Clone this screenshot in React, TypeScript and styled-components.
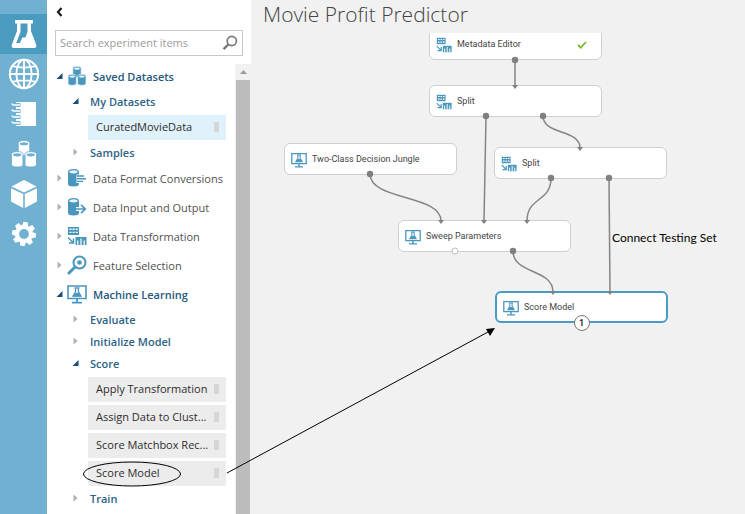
import React from "react";
import styled, { createGlobalStyle, css } from "styled-components";

const sans = '"Open Sans", "Noto Sans", sans-serif';
const BLUE = "#4a97bd";

const GlobalStyle = createGlobalStyle`
  *, *::before, *::after { box-sizing: border-box; }
  body { margin: 0; font-family: ${sans}; background: #f1f1f1; color: #444; }
  ul { list-style: none; margin: 0; padding: 0; }
  button { font: inherit; color: inherit; border: 0; background: none; padding: 0; cursor: pointer; }
  svg { display: block; flex: none; }
`;

/* ---------- layout ---------- */

const Page = styled.div`
  position: relative;
  display: flex;
  min-height: 100vh;
  overflow: hidden;
`;

const Rail = styled.nav`
  flex: none;
  width: 47px;
  padding-top: 14px;
  background: #70b0d1;
`;

const RailButton = styled.button<{ $active?: boolean }>`
  display: flex;
  align-items: center;
  justify-content: center;
  width: 100%;
  height: 40px;
  color: #fff;
  background: ${(p) => (p.$active ? "#4b9abf" : "transparent")};
`;

const Panel = styled.aside`
  flex: none;
  display: flex;
  flex-direction: column;
  width: 204px;
  background: #fff;
`;

const PanelHeader = styled.div`
  display: flex;
  height: 30px;
  padding: 6px 8px 0 9px;
  align-items: flex-start;
`;

const SearchBox = styled.label`
  display: flex;
  align-items: center;
  height: 26px;
  margin: 0 8px;
  padding: 0 4px;
  border: 1px solid #c9c9c9;
`;

const SearchInput = styled.input`
  flex: 1;
  min-width: 0;
  padding: 0 0 2px;
  border: 0;
  outline: 0;
  font: 11px ${sans};
  color: #444;
  &::placeholder { color: #9b9b9b; opacity: 1; }
`;

const PanelBody = styled.div`
  flex: 1;
  display: flex;
  padding-top: 6px;
`;

const Tree = styled.ul`
  flex: 1;
  min-width: 0;
`;

const Category = styled.button<{ $open?: boolean }>`
  display: flex;
  align-items: center;
  gap: 4px;
  width: 100%;
  height: 29px;
  padding: 0 0 1px 9px;
  font-size: 11px;
  font-weight: ${(p) => (p.$open ? 600 : 400)};
  color: ${(p) => (p.$open ? "#24587c" : "#505050")};
  white-space: nowrap;
`;

const CategoryIcon = styled.span`
  color: ${BLUE};
`;

const CategoryLabel = styled.span`
  margin-left: 2px;
`;

const Group = styled.button`
  display: flex;
  align-items: center;
  gap: 11px;
  width: 100%;
  height: 22px;
  padding: 0 0 2px 25px;
  font-size: 11px;
  font-weight: 600;
  color: #2d6388;
`;

const Items = styled.ul`
  display: grid;
  gap: 3px;
  padding: 2px 9px 2px 41px;
`;

const Item = styled.button<{ $selected?: boolean }>`
  display: flex;
  align-items: center;
  justify-content: space-between;
  width: 100%;
  height: 25px;
  padding: 0 7px 2px 8px;
  font-size: 11px;
  color: #2d2d2d;
  background: ${(p) => (p.$selected ? "#dff1fa" : "#ececec")};
`;

const Grip = styled.span`
  width: 5px;
  height: 10px;
  background: #d4d6d8;
`;

const ScrollTrack = styled.div`
  flex: none;
  display: flex;
  flex-direction: column;
  width: 16px;
  margin-top: 2px;
  background: #f1f1f1;
`;

const ScrollArrow = styled.button`
  display: flex;
  align-items: center;
  justify-content: center;
  height: 16px;
`;

const ScrollThumb = styled.div`
  flex: 1;
  margin: 0 1px;
  background: #bcbcbc;
`;

const Workspace = styled.main`
  flex: 1;
  min-width: 0;
  display: flex;
  flex-direction: column;
  background: #f1f1f1;
`;

const Title = styled.h1`
  height: 33px;
  margin: 0;
  padding-left: 12px;
  font-size: 21px;
  font-weight: 300;
  line-height: 29px;
  color: #444;
  white-space: nowrap;
`;

const Canvas = styled.div`
  position: relative;
  flex: 1;
  overflow: hidden;
`;

const Wires = styled.svg`
  position: absolute;
  inset: 0;
  width: 100%;
  height: 100%;
  pointer-events: none;
`;

const NodeBox = styled.div<{ $x: number; $y: number; $selected?: boolean }>`
  position: absolute;
  left: ${(p) => p.$x}px;
  top: ${(p) => p.$y}px;
  display: flex;
  align-items: center;
  gap: 5px;
  width: 173px;
  height: 32px;
  padding: 1px 14px 0 6px;
  border: 1px solid #cfcfcf;
  border-radius: 6px;
  background: #fff;
  font-family: Roboto, ${sans};
  font-size: 9px;
  color: #444;
  white-space: nowrap;
  ${(p) =>
    p.$selected &&
    css`
      border: 2px solid #4a9cc4;
    `}
`;

const NodeLabel = styled.span`
  flex: 1;
  line-height: 12px;
  padding-bottom: 2px;
`;

const Badge = styled.span`
  position: absolute;
  left: 50%;
  bottom: -10px;
  width: 16px;
  height: 16px;
  margin-left: -8px;
  border: 1px solid #777;
  border-radius: 50%;
  background: #fff;
  font-size: 9px;
  font-weight: 700;
  line-height: 14px;
  text-align: center;
  color: #333;
`;

const Note = styled.span`
  position: absolute;
  left: 361px;
  top: 197px;
  font: 12px/16px Lato, sans-serif;
  color: #000;
  white-space: nowrap;
`;

const Markup = styled.svg`
  position: absolute;
  top: 0;
  left: 0;
  width: 100%;
  height: 100%;
  pointer-events: none;
`;

/* ---------- icons ---------- */

const FlaskIcon = () => (
  <svg width="26" height="30" viewBox="0 0 26 30">
    <path
      fill="currentColor"
      fillRule="evenodd"
      d="M4 1H22V4.5H20V12L25.3 26Q26 29 23 29H3Q0 29 .7 26L6 12V4.5H4ZM9.5 4.5V13L5.2 24H8.8L11.4 18.5H14.4L16.5 13V4.5Z"
    />
  </svg>
);

const GlobeIcon = () => (
  <svg width="32" height="32" viewBox="0 0 32 32" fill="none" stroke="currentColor" strokeWidth="1.9">
    <circle cx="16" cy="16" r="14.2" />
    <ellipse cx="16" cy="16" rx="7.6" ry="14.2" />
    <path d="M16 2V30M2 16H30M4.3 8.2Q16 11 27.7 8.2M4.3 23.8Q16 21 27.7 23.8" />
  </svg>
);

const NotebookIcon = () => (
  <svg width="26" height="26" viewBox="0 0 26 26">
    <path fill="currentColor" d="M5 1H25V25H5Z" />
    {[4, 10, 16, 22].map((y) => (
      <g key={y} fill="none">
        <path d={`M4 ${y}H9.5`} stroke="#70b0d1" strokeWidth="4" />
        <path d={`M9 ${y}H3Q1 ${y - 0.2} 1.4 ${y - 1.6}`} stroke="currentColor" strokeWidth="1.7" />
      </g>
    ))}
  </svg>
);

const Cylinder = ({ x, y, gap }: { x: number; y: number; gap: string }) => (
  <g transform={`translate(${x} ${y})`}>
    <path d="M0 3Q0 0 6 0T12 3V13Q12 16 6 16T0 13Z" fill="currentColor" stroke={gap} strokeWidth="1" />
    <ellipse cx="6" cy="3.4" rx="4.3" ry="1.6" fill={gap} />
  </g>
);

const DatasetsIcon = ({ size = 28, gap = "#70b0d1" }: { size?: number; gap?: string }) => (
  <svg width={size} height={size} viewBox="0 0 28 29">
    <Cylinder x={8} y={0.5} gap={gap} />
    <Cylinder x={1} y={12} gap={gap} />
    <Cylinder x={15} y={12} gap={gap} />
  </svg>
);

const CubeIcon = () => (
  <svg width="28" height="30" viewBox="0 0 28 30" fill="currentColor">
    <path d="M14 1L26.5 7.5L14 13.5L1.5 7.5ZM1 9.2L13.2 15V29L1 22.5ZM27 9.2L14.8 15V29L27 22.5Z" />
  </svg>
);

const GearIcon = () => (
  <svg width="26" height="26" viewBox="-13 -13 26 26" fill="currentColor">
    {[0, 45, 90, 135, 180, 225, 270, 315].map((a) => (
      <path key={a} d="M-3.2 -7L-2.2 -12H2.2L3.2 -7Z" transform={`rotate(${a + 8})`} />
    ))}
    <circle r="7" fill="none" stroke="currentColor" strokeWidth="4.2" />
  </svg>
);

const DrumIcon = ({ kind }: { kind: "lines" | "arrow" }) => (
  <svg width="20" height="20" viewBox="0 0 20 20">
    <path d="M1 4Q1 1 6.5 1T12 4V16Q12 18.5 6.5 18.5T1 16Z" fill={BLUE} />
    <ellipse cx="6.5" cy="3.8" rx="4.2" ry="1.6" fill="#e6f3fa" />
    {kind === "lines" ? (
      <>
        <path d="M9.5 6.5H20V15H9.5Z" fill="#fff" />
        <path d="M10 8H17M10 10.7H19M10 13.4H16" stroke={BLUE} strokeWidth="1.4" />
      </>
    ) : (
      <>
        <path d="M9 12H18M14 7.5L18.5 12L14 16.5" stroke="#fff" strokeWidth="4" fill="none" />
        <path d="M9 12H18M14 7.8L18.3 12L14 16.2" stroke={BLUE} strokeWidth="1.7" fill="none" />
      </>
    )}
  </svg>
);

const TransformIcon = ({ size = 20 }: { size?: number }) => (
  <svg width={size} height={size} viewBox="0 0 20 20">
    <path d="M1 1H12V9H1Z" fill={BLUE} />
    <path d="M2.5 3.2H4.5M5.6 3.2H7.6M8.7 3.2H10.7M2.5 6.4H4.5M5.6 6.4H7.6M8.7 6.4H10.7" stroke="#fff" strokeWidth="1.4" />
    <path d="M1 11.5L6 16.5M6.5 12.5V17H2" stroke={BLUE} strokeWidth="1.5" fill="none" />
    <path d="M8.5 11H19.5V19H8.5Z" fill={BLUE} />
    <path d="M10.8 19V14.5M14 19V12.5M17.2 19V14.5" stroke="#fff" strokeWidth="1.2" />
  </svg>
);

const FeatureIcon = () => (
  <svg width="20" height="20" viewBox="0 0 20 20" fill="none" stroke={BLUE}>
    <circle cx="12.5" cy="7.5" r="6" strokeWidth="2" />
    <circle cx="12.5" cy="7.5" r="2.3" fill={BLUE} stroke="none" />
    <path d="M8 12L2 18" strokeWidth="3" strokeLinecap="round" />
  </svg>
);

const MonitorIcon = ({ size = 20 }: { size?: number }) => (
  <svg width={size} height={size} viewBox="0 0 20 20">
    <path d="M1 2H19V14.5H1Z" fill="#fff" stroke={BLUE} strokeWidth="1.6" />
    <path d="M10 15V18M5 18.6H15" stroke={BLUE} strokeWidth="1.8" />
    <path d="M7.5 3.8H12.5M8.6 4V7.5L6 12.2H14L11.4 7.5V4" fill="none" stroke={BLUE} strokeWidth="1.3" />
    <path d="M8 9.5L10 8.5L12.4 9.5L14 12.5H6Z" fill={BLUE} />
  </svg>
);

const SearchIcon = () => (
  <svg width="16" height="16" viewBox="0 0 16 16" fill="none" stroke="#777">
    <circle cx="9.8" cy="6" r="4.6" strokeWidth="1.7" />
    <path d="M6.3 9.5L1.5 14.2" strokeWidth="2.4" />
  </svg>
);

const ChevronIcon = () => (
  <svg width="7" height="12" viewBox="0 0 7 12">
    <path d="M5.5 2L2 6L5.5 10" fill="none" stroke="#1c1c1c" strokeWidth="2.2" />
  </svg>
);

const Toggle = ({ open }: { open?: boolean }) => (
  <svg width="7" height="8" viewBox="0 0 7 8">
    {open ? <path d="M6.5 1V7H.5Z" fill="#174f74" /> : <path d="M1.5 .5L5.5 4L1.5 7.5Z" fill="#b0b0b0" />}
  </svg>
);

/* ---------- data ---------- */

type GroupData = { name: string; items?: string[]; selected?: boolean };
type CategoryData = { name: string; icon: React.ReactNode; groups?: GroupData[] };

const categories: CategoryData[] = [
  {
    name: "Saved Datasets",
    icon: <DatasetsIcon size={20} gap="#eaf5fb" />,
    groups: [{ name: "My Datasets", items: ["CuratedMovieData"], selected: true }, { name: "Samples" }],
  },
  { name: "Data Format Conversions", icon: <DrumIcon kind="lines" /> },
  { name: "Data Input and Output", icon: <DrumIcon kind="arrow" /> },
  { name: "Data Transformation", icon: <TransformIcon /> },
  { name: "Feature Selection", icon: <FeatureIcon /> },
  {
    name: "Machine Learning",
    icon: <MonitorIcon />,
    groups: [
      { name: "Evaluate" },
      { name: "Initialize Model" },
      { name: "Score", items: ["Apply Transformation", "Assign Data to Clust...", "Score Matchbox Rec...", "Score Model"] },
      { name: "Train" },
    ],
  },
];

const rail = [
  { name: "Experiments", icon: <FlaskIcon /> },
  { name: "Web services", icon: <GlobeIcon /> },
  { name: "Notebooks", icon: <NotebookIcon /> },
  { name: "Datasets", icon: <DatasetsIcon /> },
  { name: "Trained models", icon: <CubeIcon /> },
  { name: "Settings", icon: <GearIcon /> },
];

const nodes = [
  { label: "Metadata Editor", x: 178, y: -5, kind: "transform", done: true },
  { label: "Split", x: 178, y: 52, kind: "transform" },
  { label: "Two-Class Decision Jungle", x: 33, y: 110, kind: "model" },
  { label: "Split", x: 243, y: 114, kind: "transform" },
  { label: "Sweep Parameters", x: 147, y: 187, kind: "model" },
  { label: "Score Model", x: 244, y: 258, kind: "model", badge: "1" },
];

const wires: [number, number, number, number][] = [
  [264, 27, 264, 53],
  [235, 83, 233, 188],
  [292, 83, 329, 115],
  [119, 141, 190, 188],
  [300, 145, 276, 188],
  [358, 145, 359, 259],
  [262, 218, 302, 259],
];

const wirePath = ([x1, y1, x2, y2]: [number, number, number, number]) => {
  if (Math.abs(x1 - x2) < 3) return `M${x1} ${y1}L${x2} ${y2}`;
  const mid = (y1 + y2) / 2;
  return `M${x1} ${y1}C${x1} ${mid + 3} ${x2} ${mid - 3} ${x2} ${y2}`;
};

/* ---------- app ---------- */

export default function App() {
  return (
    <Page>
      <GlobalStyle />
      <Rail>
        {rail.map((r, i) => (
          <RailButton key={r.name} $active={i === 0} aria-label={r.name}>
            {r.icon}
          </RailButton>
        ))}
      </Rail>
      <Panel>
        <PanelHeader>
          <button aria-label="Collapse">
            <ChevronIcon />
          </button>
        </PanelHeader>
        <SearchBox>
          <SearchInput placeholder="Search experiment items" aria-label="Search experiment items" />
          <SearchIcon />
        </SearchBox>
        <PanelBody>
          <Tree>
            {categories.map((c) => (
              <li key={c.name}>
                <Category $open={!!c.groups}>
                  <Toggle open={!!c.groups} />
                  <CategoryIcon>{c.icon}</CategoryIcon>
                  <CategoryLabel>{c.name}</CategoryLabel>
                </Category>
                {c.groups && (
                  <ul>
                    {c.groups.map((g) => (
                      <li key={g.name}>
                        <Group>
                          <Toggle open={!!g.items} />
                          {g.name}
                        </Group>
                        {g.items && (
                          <Items>
                            {g.items.map((t) => (
                              <li key={t}>
                                <Item $selected={g.selected}>
                                  {t}
                                  <Grip />
                                </Item>
                              </li>
                            ))}
                          </Items>
                        )}
                      </li>
                    ))}
                  </ul>
                )}
              </li>
            ))}
          </Tree>
          <ScrollTrack>
            <ScrollArrow aria-label="Scroll up">
              <svg width="7" height="4" viewBox="0 0 7 4">
                <path d="M0 4L3.5 0L7 4Z" fill="#9a9a9a" />
              </svg>
            </ScrollArrow>
            <ScrollThumb />
          </ScrollTrack>
        </PanelBody>
      </Panel>
      <Workspace>
        <Title>Movie Profit Predictor</Title>
        <Canvas>
          {nodes.map((n) => (
            <NodeBox key={`${n.x}-${n.y}`} $x={n.x} $y={n.y} $selected={!!n.badge}>
              {n.kind === "model" ? <MonitorIcon size={16} /> : <TransformIcon size={16} />}
              <NodeLabel>{n.label}</NodeLabel>
              {n.done && (
                <svg width="10" height="8" viewBox="0 0 10 8">
                  <path d="M1 4L3.8 6.7L9 1" fill="none" stroke="#7fbb37" strokeWidth="1.8" />
                </svg>
              )}
              {n.badge && <Badge>{n.badge}</Badge>}
            </NodeBox>
          ))}
          <Wires>
            {wires.map((w) => (
              <g key={w.join()}>
                <path d={wirePath(w)} fill="none" stroke="#858585" strokeWidth="1.5" />
                <circle cx={w[0]} cy={w[1]} r="3.2" fill="#808080" />
                <path d={`M${w[2] - 3} ${w[3] - 1}h6l-3 4z`} fill="#808080" />
              </g>
            ))}
            <circle cx="204" cy="218" r="3" fill="#fff" stroke="#bdbdbd" />
          </Wires>
          <Note>Connect Testing Set</Note>
        </Canvas>
      </Workspace>
      <Markup>
        <ellipse cx="132" cy="474" rx="48.5" ry="12" fill="none" stroke="#000" />
        <path d="M227 473L488 332" stroke="#000" fill="none" />
        <path d="M495 328L490 336L486 329Z" fill="#000" />
      </Markup>
    </Page>
  );
}
